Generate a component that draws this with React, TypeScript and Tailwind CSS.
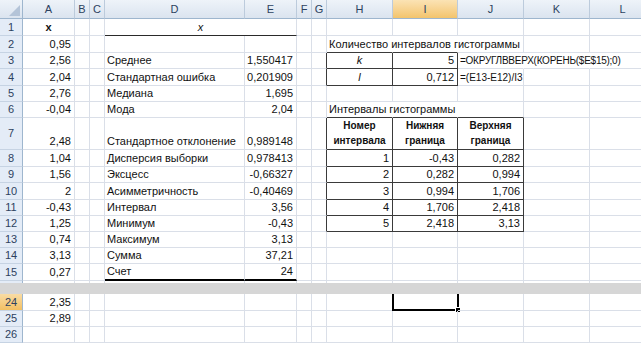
import React from "react";

type Cell = {
  v?: string;
  a?: "l" | "r" | "c";
  b?: boolean;
  i?: boolean;
  r?: string; // right border classes
  bb?: string; // bottom border classes
  t?: string; // extra text classes
  hdr?: boolean; // wrapped bold header
  w?: string; // merged width
  skip?: boolean;
  sel?: boolean;
};

type Row = { n: string; h: string; cells: Partial<Record<string, Cell>> };

const cols = [
  { k: "A", w: "w-[52px]" },
  { k: "B", w: "w-[15px]" },
  { k: "C", w: "w-[15px]" },
  { k: "D", w: "w-[140px]" },
  { k: "E", w: "w-[52px]" },
  { k: "F", w: "w-[15px]" },
  { k: "G", w: "w-[15px]" },
  { k: "H", w: "w-[66px]" },
  { k: "I", w: "w-[65px]" },
  { k: "J", w: "w-[66px]" },
  { k: "K", w: "w-[66px]" },
  { k: "L", w: "w-[66px]" },
];

// границы таблиц
const DKR = "border-r border-r-[#3a3a3a]";
const DKB = "border-b border-b-[#3a3a3a]";
const NR = "border-r border-r-transparent";
const box: Cell = { r: DKR, bb: DKB };

const rows: Row[] = [
  {
    n: "1",
    h: "h-[17px]",
    cells: {
      A: { v: "x", a: "c", b: true },
      D: { v: "x", a: "c", i: true, w: "w-[192px]", bb: "border-b border-b-[#2a2a2a]" },
      E: { skip: true },
    },
  },
  {
    n: "2",
    h: "h-[17px]",
    cells: {
      A: { v: "0,95" },
      H: { v: "Количество интервалов гистограммы", a: "l", r: NR, bb: DKB },
      I: { r: NR, bb: DKB },
    },
  },
  {
    n: "3",
    h: "h-[16px]",
    cells: {
      A: { v: "2,56" },
      D: { v: "Среднее", a: "l" },
      E: { v: "1,550417" },
      G: { r: DKR },
      H: { ...box, v: "k", a: "c", i: true },
      I: { ...box, v: "5" },
      J: {
        v: "=ОКРУГЛВВЕРХ(КОРЕНЬ($E$15);0)",
        a: "l",
        r: NR,
        t: "text-[10px] tracking-[-0.25px]",
      },
      K: { r: NR },
    },
  },
  {
    n: "4",
    h: "h-[17px]",
    cells: {
      A: { v: "2,04" },
      D: { v: "Стандартная ошибка", a: "l" },
      E: { v: "0,201909" },
      G: { r: DKR },
      H: { ...box, v: "l", a: "c", i: true },
      I: { ...box, v: "0,712" },
      J: { v: "=(E13-E12)/I3", a: "l", t: "text-[10px]" },
    },
  },
  {
    n: "5",
    h: "h-[16px]",
    cells: { A: { v: "2,76" }, D: { v: "Медиана", a: "l" }, E: { v: "1,695" } },
  },
  {
    n: "6",
    h: "h-[16px]",
    cells: {
      A: { v: "-0,04" },
      D: { v: "Мода", a: "l" },
      E: { v: "2,04" },
      H: { v: "Интервалы гистограммы", a: "l", r: NR, bb: DKB },
      I: { r: NR, bb: DKB },
      J: { bb: DKB },
    },
  },
  {
    n: "7",
    h: "h-[32px]",
    cells: {
      A: { v: "2,48" },
      D: { v: "Стандартное отклонение", a: "l" },
      E: { v: "0,989148" },
      G: { r: DKR },
      H: { ...box, v: "Номер\nинтервала", hdr: true },
      I: { ...box, v: "Нижняя\nграница", hdr: true },
      J: { ...box, v: "Верхняя\nграница", hdr: true },
    },
  },
];

const stats: [string, string, string, string][] = [
  ["1,04", "Дисперсия выборки", "0,978413", "17"],
  ["1,56", "Эксцесс", "-0,66327", "16"],
  ["2", "Асимметричность", "-0,40469", "17"],
  ["-0,43", "Интервал", "3,56", "16"],
  ["1,25", "Минимум", "-0,43", "16"],
];
const intervals = [
  ["1", "-0,43", "0,282"],
  ["2", "0,282", "0,994"],
  ["3", "0,994", "1,706"],
  ["4", "1,706", "2,418"],
  ["5", "2,418", "3,13"],
];
const heights: Record<string, string> = { "16": "h-[16px]", "17": "h-[17px]" };

stats.forEach((s, idx) => {
  const iv = intervals[idx];
  rows.push({
    n: String(8 + idx),
    h: heights[s[3]],
    cells: {
      A: { v: s[0] },
      D: { v: s[1], a: "l" },
      E: { v: s[2] },
      G: { r: DKR },
      H: { ...box, v: iv[0] },
      I: { ...box, v: iv[1] },
      J: { ...box, v: iv[2] },
    },
  });
});

rows.push(
  {
    n: "13",
    h: "h-[16px]",
    cells: { A: { v: "0,74" }, D: { v: "Максимум", a: "l" }, E: { v: "3,13" } },
  },
  {
    n: "14",
    h: "h-[16px]",
    cells: { A: { v: "3,13" }, D: { v: "Сумма", a: "l" }, E: { v: "37,21" } },
  },
  {
    n: "15",
    h: "h-[17px]",
    cells: {
      A: { v: "0,27" },
      D: { v: "Счет", a: "l", bb: "border-b-2 border-b-black" },
      E: { v: "24", bb: "border-b-2 border-b-black" },
    },
  }
);

const bottomRows: Row[] = [
  { n: "24", h: "h-[17px]", cells: { A: { v: "2,35" }, I: { sel: true } } },
  { n: "25", h: "h-[16px]", cells: { A: { v: "2,89" } } },
  { n: "26", h: "h-[16px]", cells: {} },
];

function GridCell({ w, cell }: { w: string; cell?: Cell }) {
  const c = cell || {};
  const right = c.r || "border-r border-r-[#dadfe8]";
  const bottom = c.bb || "border-b border-b-[#dadfe8]";
  const width = c.w || w;

  if (c.hdr) {
    return (
      <div
        className={`${width} ${right} ${bottom} shrink-0 h-full flex items-end justify-center pb-[1px] text-center font-bold text-[10px] leading-[15px] whitespace-pre-line`}
      >
        {c.v}
      </div>
    );
  }

  const align =
    c.a === "l" ? "justify-start pl-[2px]" : c.a === "c" ? "justify-center" : "justify-end pr-[3px]";

  return (
    <div
      className={`${width} ${right} ${bottom} relative shrink-0 h-full flex items-end ${align} pb-[1px] leading-[13px] whitespace-nowrap ${
        c.b ? "font-bold" : ""
      } ${c.i ? "italic" : ""}`}
    >
      {c.v && <span className={c.t || ""}>{c.v}</span>}
      {c.sel && (
        <div className="absolute -left-[1px] top-0 w-[67px] h-[17px] border-2 border-t-0 border-black pointer-events-none">
          <div className="absolute -right-[4px] -bottom-[4px] w-[6px] h-[6px] bg-black border border-white" />
        </div>
      )}
    </div>
  );
}

function RowHeader({ n, active }: { n: string; active?: boolean }) {
  return (
    <div
      className={`w-[23px] shrink-0 h-full flex items-center justify-center border-r border-b border-r-[#9eb6ce] border-b-[#c6d3e3] text-[11px] text-[#2d4260] ${
        active ? "bg-linear-to-b from-[#f9dca4] to-[#f2c062]" : "bg-[#e4ecf7]"
      }`}
    >
      {n}
    </div>
  );
}

function SheetRow({ row, active }: { row: Row; active?: boolean }) {
  return (
    <div className={`flex ${row.h}`}>
      <RowHeader n={row.n} active={active} />
      {cols.map((col) => {
        const cell = row.cells[col.k];
        if (cell?.skip) return null;
        return <GridCell key={col.k} w={col.w} cell={cell} />;
      })}
    </div>
  );
}

export default function App() {
  return (
    <div className="w-[641px] h-[343px] overflow-hidden bg-white text-[11px] text-[#111] font-['Liberation_Sans',Arial,sans-serif]">
      {/* заголовки столбцов */}
      <div className="flex h-[19px]">
        <div className="w-[23px] shrink-0 h-full relative bg-linear-to-b from-[#eef3f9] to-[#dbe4ef] border-r border-b border-r-[#9eb6ce] border-b-[#9eb6ce]">
          <svg className="absolute right-[2px] bottom-[2px]" width="11" height="11" viewBox="0 0 11 11">
            <polygon points="11,0 11,11 0,11" fill="#b4c4d8" />
          </svg>
        </div>
        {cols.map((col) => (
          <div
            key={col.k}
            className={`${col.w} shrink-0 h-full flex items-center justify-center pt-[1px] border-r border-b border-r-[#bccbdc] border-b-[#9eb6ce] text-[#2d4260] ${
              col.k === "I"
                ? "bg-linear-to-b from-[#fbe3b4] to-[#f3c46c]"
                : "bg-linear-to-b from-[#eef3f9] to-[#dbe4ef]"
            }`}
          >
            {col.k}
          </div>
        ))}
      </div>

      {rows.map((row) => (
        <SheetRow key={row.n} row={row} />
      ))}

      {/* кусочек строки 16 и линия разделения окна */}
      <div className="flex h-[2px]">
        <div className="w-[23px] shrink-0 bg-[#e4ecf7] border-r border-r-[#9eb6ce]" />
        {cols.map((col) => (
          <div key={col.k} className={`${col.w} shrink-0 border-r border-r-[#dadfe8]`} />
        ))}
      </div>
      <div className="h-[11px] bg-[#d6d6d6]" />

      {bottomRows.map((row) => (
        <SheetRow key={row.n} row={row} active={row.n === "24"} />
      ))}
    </div>
  );
}
